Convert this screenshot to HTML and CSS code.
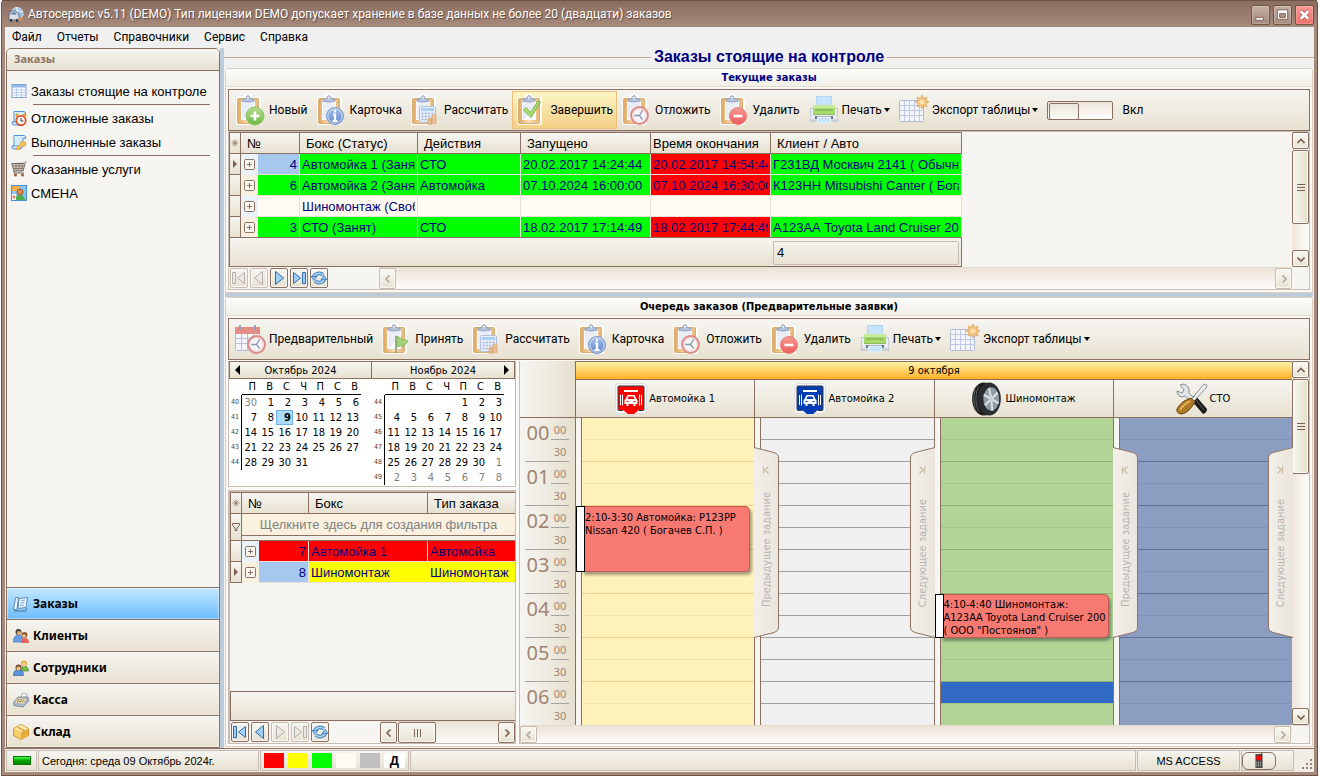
FILE: index.html
```html
<!DOCTYPE html>
<html lang="ru">
<head>
    <meta charset="UTF-8">
    <meta name="viewport" content="width=device-width, initial-scale=1.0">
    <title>Автосервис v5.11</title>
    <link rel="stylesheet" href="styles.css">
</head>
<body>
    <!-- Icon set -->
    <svg class="defs" aria-hidden="true">
        <defs>
            <linearGradient id="gGreen" x1="0" y1="0" x2="0" y2="1"><stop offset="0" stop-color="#b4dc8c"/><stop offset="1" stop-color="#6cb840"/></linearGradient>
            <linearGradient id="gRed" x1="0" y1="0" x2="0" y2="1"><stop offset="0" stop-color="#f79a94"/><stop offset="1" stop-color="#ee5a58"/></linearGradient>
            <linearGradient id="gInfo" x1="0" y1="0" x2="0" y2="1"><stop offset="0" stop-color="#a9c3ea"/><stop offset="1" stop-color="#5c86cc"/></linearGradient>
            <linearGradient id="gWood" x1="0" y1="0" x2="1" y2="0"><stop offset="0" stop-color="#e0a862"/><stop offset="0.5" stop-color="#f8ddb0"/><stop offset="1" stop-color="#e6b878"/></linearGradient>
            <linearGradient id="gTab" x1="0" y1="0" x2="1" y2="0"><stop offset="0" stop-color="#f3efe8"/><stop offset="1" stop-color="#eae5dd"/></linearGradient>
            <symbol id="clip" viewBox="0 0 32 32">
                <path d="M3 3h5q1-3 5-3t5 3h6q2 0 2 2v24q0 2-2 2H3q-2 0-2-2V5q0-2 2-2z" fill="#fff" opacity="0.9"/>
                <rect x="2.500" y="4.500" width="21" height="25" rx="1" fill="url(#gWood)" stroke="#dcae74"/>
                <path d="M6 6h14v20H6z" fill="#fdfdff"/>
                <path d="M7 7h12v4L9 25H7z" fill="#eaecf6"/>
                <path d="M6.500 7q6.500 2 13 0l-1-2h-3q-1-3.500-2.500-3.500T10.500 5h-3z" fill="#b9c5dc" stroke="#8d9dbd" stroke-width="0.900"/>
                <circle cx="13" cy="3.600" r="0.900" fill="#fff"/>
            </symbol>
            <symbol id="clock" viewBox="0 0 18 18">
                <circle cx="9" cy="9" r="8" fill="#f4f6fa" stroke="#dc8a85" stroke-width="1.800"/>
                <circle cx="9" cy="9" r="6.400" fill="none" stroke="#eec4c1" stroke-width="0.800"/>
                <path d="M9 9L12 4M9 9H4M9 9l3 4" stroke="#8b96ae" stroke-width="1.200" fill="none"/>
            </symbol>
            <symbol id="i-new" viewBox="0 0 32 32"><use href="#clip"/><circle cx="20" cy="22" r="9" fill="url(#gGreen)" stroke="#8fc36c"/><path d="M20 17.500v9M15.500 22h9" stroke="#fff" stroke-width="2.600"/></symbol>
            <symbol id="i-card" viewBox="0 0 32 32"><use href="#clip"/><circle cx="19" cy="22" r="8.500" fill="url(#gInfo)" stroke="#7d9acc"/><circle cx="19" cy="22" r="7.200" fill="none" stroke="#d3e0f5"/><path d="M19 16v2.400M17 20.500h2V27M16.500 27h5" stroke="#fff" stroke-width="2.200" fill="none"/></symbol>
            <symbol id="i-calc" viewBox="0 0 32 32"><use href="#clip"/><rect x="9.500" y="12.500" width="16" height="16" rx="1" fill="#e6edf8" stroke="#b2c1de"/><path d="M11 14h13v3H11z" fill="#a8d0f2"/><path d="M11.500 19.500h12M11.500 22.500h12M11.500 25.500h12" stroke="#a3b4d4" stroke-width="1.500" stroke-dasharray="2 1.300"/><rect x="18" y="24.500" width="4" height="6" rx="1" fill="#e9bb8a" stroke="#cf9860" stroke-width="0.600"/><rect x="22" y="21" width="4" height="9" rx="1" fill="#edc297" stroke="#cf9860" stroke-width="0.600"/></symbol>
            <symbol id="i-done" viewBox="0 0 32 32"><use href="#clip"/><path d="M7.500 16l2.500-2.500 4.500 5L22 7l2.500 1L15 23.500z" fill="#a9dc70" stroke="#7bb548"/></symbol>
            <symbol id="i-defer" viewBox="0 0 32 32"><use href="#clip"/><use href="#clock" x="9" y="12" width="19" height="19"/></symbol>
            <symbol id="i-del" viewBox="0 0 32 32"><use href="#clip"/><circle cx="19" cy="22" r="8.500" fill="url(#gRed)" stroke="#ea7d79"/><path d="M14.500 22h9" stroke="#fff" stroke-width="2.600"/></symbol>
            <symbol id="i-accept" viewBox="0 0 32 32"><use href="#clip"/><path d="M15 13v17" stroke="#99a585" stroke-width="1.800"/><path d="M16 13q4 2 6 4 2-1 5 1-2 3-4 5-3-1-7 1z" fill="#a3d37a" stroke="#7fb357" stroke-width="0.800"/></symbol>
            <symbol id="i-sched" viewBox="0 0 32 32"><rect x="0.500" y="4.500" width="24" height="23" rx="1" fill="#f3f5fb" stroke="#b4bed6"/><path d="M0 4h25v7H0z" fill="#e48e88"/><path d="M1 15.500h23M1 20.500h23M6.500 11v16M12.500 11v16M18.500 11v16" stroke="#b6c1d8"/><path d="M5 2v5M20 2v5" stroke="#979eb0" stroke-width="1.800"/><use href="#clock" x="12" y="12" width="19" height="19"/></symbol>
            <symbol id="i-print" viewBox="0 0 32 32"><path d="M8.500 2.500h15V13h-15z" fill="#c6e3fc" stroke="#b1d4f5"/><path d="M2.500 14.500h27V26h-27z" fill="#e8ebf1" stroke="#c3c9d5"/><path d="M5 11h22v9H5z" fill="#a9da70"/><path d="M5 11h22v3H5z" fill="#c6eb9a"/><path d="M7 16h18" stroke="#86bb50" stroke-width="1.500"/><path d="M5 20.500h22" stroke="#8cbd58"/><path d="M7 22h18v3H7z" fill="#6f7885"/><path d="M9.500 23h13v6h-13z" fill="#c6e3fc" stroke="#eef6ff"/><path d="M1 27h8M23 27h8" stroke="#c3c8d2" stroke-width="1.500"/></symbol>
            <symbol id="i-export" viewBox="0 0 32 32"><rect x="1.500" y="6.500" width="24" height="21" rx="1" fill="#f3f5fc" stroke="#b0bbd8"/><path d="M2 11.500h23M2 16.500h23M2 21.500h23M6.500 7v20M11.500 7v20M16.500 7v20M21.500 7v20" stroke="#bec8e0"/><path d="M24 1l1.600 3.500L29 3l-1 3.500 3 1.500-3 1.500 1 3.500-3.400-1.500L24 15l-1.600-3.500L19 13l1-3.500L17 8l3-1.500L19 3l3.400 1.500z" fill="#f3c27c" stroke="#dba75e" stroke-width="0.800"/><circle cx="24" cy="8" r="2.500" fill="#fbdfab"/></symbol>

            <symbol id="n-first" viewBox="0 0 16 16"><path d="M1.500 2.500h3v11h-3zM13.500 2.500v11l-7-5.500z" fill="currentColor" stroke="var(--edge)"/></symbol>
            <symbol id="n-prev" viewBox="0 0 16 16"><path d="M11.500 1.500v13L3.500 8z" fill="currentColor" stroke="var(--edge)"/></symbol>
            <symbol id="n-next" viewBox="0 0 16 16"><path d="M4.500 1.500v13L12.500 8z" fill="currentColor" stroke="var(--edge)"/></symbol>
            <symbol id="n-last" viewBox="0 0 16 16"><path d="M11.500 2.500h3v11h-3zM2.500 2.500v11l7-5.500z" fill="currentColor" stroke="var(--edge)"/></symbol>
            <symbol id="n-sync" viewBox="0 0 16 16"><path d="M2.500 7.500A5.500 4.800 0 0 1 12 5M13.500 8.500A5.500 4.800 0 0 1 4 11" fill="none" stroke="#3f7fbd" stroke-width="3.600"/><path d="M2.500 7.500A5.500 4.800 0 0 1 12 5M13.500 8.500A5.500 4.800 0 0 1 4 11" fill="none" stroke="#a5d2f7" stroke-width="1.600"/><path d="M0 6.500h6L3 10.500zM10 9.500h6L13 5.500z" fill="#8cc2f0" stroke="#3f7fbd" stroke-width="0.800"/></symbol>
            <symbol id="a-left" viewBox="0 0 8 8"><path d="M5.500 0.500L2 4l3.500 3.500" fill="none" stroke="currentColor" stroke-width="1.600"/></symbol>
            <symbol id="a-right" viewBox="0 0 8 8"><path d="M2.500 0.500L6 4 2.500 7.500" fill="none" stroke="currentColor" stroke-width="1.600"/></symbol>
            <symbol id="a-up" viewBox="0 0 8 8"><path d="M0.500 6L4 2.500 7.500 6" fill="none" stroke="currentColor" stroke-width="1.600"/></symbol>
            <symbol id="a-down" viewBox="0 0 8 8"><path d="M0.500 2.500L4 6l3.500-3.500" fill="none" stroke="currentColor" stroke-width="1.600"/></symbol>
            <symbol id="j-prev" viewBox="0 0 8 8"><path d="M6.500 0.500L3 4l3.500 3.500M1.500 0.500v7" fill="none" stroke="currentColor" stroke-width="1.300"/></symbol>
            <symbol id="j-next" viewBox="0 0 8 8"><path d="M1.500 0.500L5 4 1.500 7.500M6.500 0.500v7" fill="none" stroke="currentColor" stroke-width="1.300"/></symbol>
            <symbol id="star" viewBox="0 0 8 8"><path d="M4 0.500v7M0.500 4h7M1.500 1.500l5 5M6.500 1.500l-5 5" stroke="#8f7465" stroke-width="0.800"/></symbol>
            <symbol id="wash" viewBox="0 0 32 34"><rect x="0.500" y="1.500" width="31" height="30" rx="3" fill="#f8f8fa" stroke="#dedee2"/><path d="M4 4h24q1 0 1 1v22q0 1-1 1h-4l-5 4h-6l-5-4H4q-1 0-1-1V5q0-1 1-1z" fill="currentColor"/><path d="M8 28.500H4q-1 0-1-1V5q0-1 1-1h24q1 0 1 1v22.500q0 1-1 1h-4" fill="none" stroke="#3a3a3e"/><path d="M9 9h14" stroke="#fff" stroke-width="2"/><path d="M5.500 13v10M26.500 13v10M7.500 12.500v11M24.500 12.500v11" stroke="#fff"/><path d="M10.500 17l2-4h7l2 4 1 1v4h-2v2h-2v-2h-5v2h-2v-2h-2v-4z" fill="#fff"/><path d="M12.500 17l1-2.500h5l1 2.500zM11.500 19h2v1h-2zM18.500 19h2v1h-2z" fill="currentColor"/></symbol>
            <symbol id="tire" viewBox="0 0 30 32"><ellipse cx="12" cy="16" rx="11" ry="15.500" fill="#1c1c1e"/><path d="M4 7Q1 16 4 25M7 4Q2 16 7 28" stroke="#5a5c60" fill="none"/><ellipse cx="17" cy="16" rx="11" ry="15.500" fill="#2b2c2f"/><ellipse cx="19" cy="16" rx="7.500" ry="11" fill="#8f9aa4"/><path d="M19 16L17 5.500M19 16l6-6M19 16l7 4M19 16l1 11M19 16l-6 6M19 16l-7-4" stroke="#d8dfe5" stroke-width="2"/><circle cx="19" cy="16" r="2.400" fill="#c9d0d6"/></symbol>
            <symbol id="tools" viewBox="0 0 32 32"><path d="M14 16l5-4 12 14q0 4-4 5z" fill="#1e1e1e"/><path d="M20 17l8 10" stroke="#606060"/><path d="M8 1L4 2l4 5-2 3-5-2Q1 13 6 14l3-1 6 5 3-3-5-5q1-7-5-9z" fill="#e2e5e7" stroke="#7e8488" stroke-width="0.900"/><path d="M29 1l-2 1-11 14 2 2L30 5l1-3z" fill="#eceef0" stroke="#83888c" stroke-width="0.900"/><path d="M15 15l4 4Q12 31 5 31q-5-1-4-5Q5 18 15 15z" fill="#b07a24" stroke="#6c4610"/><path d="M14 18Q8 21 4 27" stroke="#e9b862" stroke-width="1.500" fill="none"/></symbol>
            <symbol id="plus" viewBox="0 0 11 11"><rect x="0.500" y="0.500" width="10" height="10" rx="1" fill="#f8f4ee" stroke="#8f7465"/><path d="M5.500 3v5M3 5.500h5" stroke="#8f7465"/></symbol>
            <symbol id="s-list" viewBox="0 0 16 16"><rect x="1" y="1.500" width="14" height="13" fill="#fff" stroke="#7fa3d4"/><path d="M1 2h14v2.500H1z" fill="#93b9e8"/><path d="M2 7h12M2 9.500h12M2 12h12M5.500 5v9M10.500 5v9" stroke="#b3cbea"/></symbol>
            <symbol id="s-scroll" viewBox="0 0 16 16"><path d="M3 1.500h10q2 0 1.500 3H12l-1 9q-1 2-3 1.500H2Q0 14 1.500 12H3l0-8q-1-2 0-2.500z" fill="#d8ecfd" stroke="#4f93d2"/><path d="M1.500 12h7l1 2.500" fill="#fff" stroke="#4f93d2"/></symbol>
            <symbol id="s-defer" viewBox="0 0 16 16"><use href="#s-scroll"/><path d="M5 6l2-2M15 6l-2-2" stroke="#e8a125" stroke-width="2.500"/><circle cx="10" cy="10.500" r="4.700" fill="#fff" stroke="#e2552a" stroke-width="1.800"/><path d="M10 8v3h2.500" stroke="#333" fill="none"/></symbol>
            <symbol id="s-done" viewBox="0 0 16 16"><use href="#s-scroll"/><path d="M10 8q3-2 5 1l-1 3-3 0-4 4H5.500v-2l4-4z" fill="#f6c65b" stroke="#d99a2a" stroke-width="0.800"/></symbol>
            <symbol id="s-cart" viewBox="0 0 16 16"><path d="M0.500 2.500h13l2-2M1 3l2 7h9l2-7" fill="#d9cfc6" stroke="#6f625a"/><path d="M2 5h11M2.500 7.500h10M5 3v7M8 3v7M11 3v7" stroke="#8a7c72"/><path d="M3 10v2h10" fill="none" stroke="#6f625a"/><circle cx="4.500" cy="14" r="1.500" fill="#9a5d38"/><circle cx="11.500" cy="14" r="1.500" fill="#9a5d38"/></symbol>
            <symbol id="s-shift" viewBox="0 0 16 16"><rect x="0.500" y="0.500" width="15" height="15" fill="#8cc4f2" stroke="#4c8fd0"/><path d="M1 1h8v5H1z" fill="#f5b04c"/><circle cx="9" cy="7" r="3" fill="#e08a4c" stroke="#9a5a2c"/><path d="M4 15q1-5 5-5t5 5z" fill="#4fae4a"/><path d="M1 9h4v6H1z" fill="#fff"/><path d="M3 10v4M1.500 12h3" stroke="#e15c3c"/></symbol>
            <symbol id="b-orders" viewBox="0 0 16 16"><path d="M2.500 1.500h3l-1.500 12H0.500zM6 2.500l8.500-1-1.500 10-8 1z" fill="#e8f5ff" stroke="#6089b4"/><path d="M8 4.500l4-.5M7.500 7l4-.5M7 9.500l4-.5" stroke="#7aa5cf"/><path d="M1 15h11.500l1.500-3" fill="none" stroke="#5f8cba" stroke-width="1.500"/></symbol>
            <symbol id="b-clients" viewBox="0 0 16 16"><path d="M0.500 14q0-7 5-7t4.500 7z" fill="#6b9ee4" stroke="#3f6fb8" stroke-width="0.700"/><circle cx="5.500" cy="4" r="3" fill="#4c4038"/><circle cx="6" cy="5" r="2" fill="#e2b186"/><path d="M8 15q0-5 4-5t4 5z" fill="#e6635a"/><circle cx="11.500" cy="7" r="2.900" fill="#8a5932"/><circle cx="11" cy="8" r="1.800" fill="#efc59b"/></symbol>
            <symbol id="b-staff" viewBox="0 0 16 16"><path d="M8 11q0-5 3.500-5t4 5z" fill="#77b94c" stroke="#4d8b2c" stroke-width="0.700"/><circle cx="11" cy="3.500" r="3" fill="#e9ab3c"/><circle cx="11" cy="4.500" r="2" fill="#f4cea4"/><path d="M0.500 15.500q0-6 5-6t5 6z" fill="#5b93dd" stroke="#33639f" stroke-width="0.700"/><circle cx="5.500" cy="7.500" r="3" fill="#7a4c2c"/><circle cx="5.500" cy="8.500" r="2" fill="#efc298"/></symbol>
            <symbol id="b-cash" viewBox="0 0 16 16"><path d="M8 6l1-5 5 1-1 4z" fill="#fff" stroke="#8ea5bf" stroke-width="0.800"/><path d="M0.500 10.500L5 5l10 0 .5 4L10 15 1 13.500z" fill="#aeb9c6" stroke="#6d7a8a" stroke-width="0.800"/><path d="M2 10l3-4 8 1-3 5z" fill="#ecd998"/><path d="M4 9l6 1M5 7.500l6 .8" stroke="#6d6a55" stroke-dasharray="1.500 1"/></symbol>
            <symbol id="b-store" viewBox="0 0 16 16"><path d="M8 0.500l7.500 4v7L8 15.500l-7.500-4v-7z" fill="#f7cf6b" stroke="#d29a2c"/><path d="M8 8l7-3.500v7L8 15z" fill="#e8ae3c"/><path d="M1 4.500L8 1l7 3.500L8 8z" fill="#fde9ae"/><path d="M4 3l7 3.500v3" stroke="#e1aa45" fill="none" stroke-width="1.500"/></symbol>
        </defs>
    </svg>

    <div class="window">
        <header class="titlebar">
            <svg class="app-icon" viewBox="0 0 16 16"><circle cx="9" cy="6.500" r="6" fill="#8fbce2" stroke="#e4eef7"/><path d="M4 5q5-3 10 0M9 1v11" stroke="#fff" fill="none"/><path d="M1 8l2-4h5l3 4v5H1z" fill="#d9dfe6" stroke="#66727f"/><path d="M3 7.500l1-2h3.500l1 2z" fill="#4f7faa"/><path d="M2 12h2v3H2zM8 12h2v3H8z" fill="#39424c"/><circle cx="12.500" cy="12" r="2" fill="#e08b5a"/></svg>
            <h1 class="app-title">Автосервис v5.11 (DEMO) Тип лицензии DEMO допускает хранение в базе данных не более 20 (двадцати) заказов</h1>
            <button class="win-btn" aria-label="Свернуть"><svg viewBox="0 0 18 18"><path d="M4 11.500h8v3H4z" fill="#fff" stroke="#7d6154"/></svg></button>
            <button class="win-btn" aria-label="Развернуть"><svg viewBox="0 0 18 18"><path d="M3.500 3.500h11v10h-11z" fill="#fff" stroke="#7d6154"/><path d="M6 7.500h6v4H6z" fill="#b09588" stroke="#7d6154"/></svg></button>
            <button class="win-btn close" aria-label="Закрыть"><svg viewBox="0 0 18 18"><path d="M5 5l8 8M13 5l-8 8" stroke="#b3564f" stroke-width="4.500"/><path d="M5 5l8 8M13 5l-8 8" stroke="#fff" stroke-width="3"/></svg></button>
        </header>

        <nav class="menu">
            <a href="#">Файл</a>
            <a href="#">Отчеты</a>
            <a href="#">Справочники</a>
            <a href="#">Сервис</a>
            <a href="#">Справка</a>
        </nav>

        <div class="workspace">
            <aside class="sidebar">
                <h2 class="side-title">Заказы</h2>
                <div class="side-links">
                    <a href="#"><svg><use href="#s-list"/></svg>Заказы стоящие на контроле</a>
                    <hr>
                    <a href="#"><svg><use href="#s-defer"/></svg>Отложенные заказы</a>
                    <a href="#"><svg><use href="#s-done"/></svg>Выполненные заказы</a>
                    <hr>
                    <a href="#"><svg><use href="#s-cart"/></svg>Оказанные услуги</a>
                    <a href="#"><svg><use href="#s-shift"/></svg>СМЕНА</a>
                </div>
                <div class="side-groups">
                    <button class="active"><svg><use href="#b-orders"/></svg>Заказы</button>
                    <button><svg><use href="#b-clients"/></svg>Клиенты</button>
                    <button><svg><use href="#b-staff"/></svg>Сотрудники</button>
                    <button><svg><use href="#b-cash"/></svg>Касса</button>
                    <button><svg><use href="#b-store"/></svg>Склад</button>
                </div>
            </aside>

            <main class="main">
                <div class="page-title"><h2>Заказы стоящие на контроле</h2></div>

                <section class="panel">
                    <h3 class="panel-title navy">Текущие заказы</h3>
                    <div class="toolbar">
                        <button><svg><use href="#i-new"/></svg>Новый</button>
                        <button><svg><use href="#i-card"/></svg>Карточка</button>
                        <button><svg><use href="#i-calc"/></svg>Рассчитать</button>
                        <button class="hot"><svg><use href="#i-done"/></svg>Завершить</button>
                        <button><svg><use href="#i-defer"/></svg>Отложить</button>
                        <button><svg><use href="#i-del"/></svg>Удалить</button>
                        <button><svg><use href="#i-print"/></svg>Печать<i class="caret"></i></button>
                        <button><svg><use href="#i-export"/></svg>Экспорт таблицы<i class="caret"></i></button>
                        <label class="switch"><input type="checkbox">Вкл</label>
                    </div>
                    <div class="grid">
                        <div class="grid-view">
                            <div class="grid-rows">
                                <table class="data orders">
                                    <colgroup><col class="c-mark"><col class="c-exp"><col class="c-num"><col class="c-box"><col class="c-act"><col class="c-start"><col class="c-end"><col class="c-client"></colgroup>
                                    <thead>
                                        <tr><th class="mark"><svg><use href="#star"/></svg></th><th colspan="2">№</th><th>Бокс (Статус)</th><th>Действия</th><th>Запущено</th><th class="tight">Время окончания</th><th>Клиент / Авто</th></tr>
                                    </thead>
                                    <tbody>
                                        <tr class="busy"><td class="mark"><i class="cursor"></i></td><td class="exp blue"><svg><use href="#plus"/></svg></td><td class="num focus">4</td><td><div>Автомойка 1 (Занят)</div></td><td>СТО</td><td>20.02.2017 14:24:44</td><td class="late"><div>20.02.2017 14:54:44</div></td><td><div>Г231ВД Москвич 2141 ( Обычный )</div></td></tr>
                                        <tr class="busy"><td class="mark"></td><td class="exp"><svg><use href="#plus"/></svg></td><td class="num">6</td><td><div>Автомойка 2 (Занят)</div></td><td>Автомойка</td><td>07.10.2024 16:00:00</td><td class="late"><div>07.10.2024 16:30:00</div></td><td><div>К123НН Mitsubishi Canter ( Богачев )</div></td></tr>
                                        <tr><td class="mark"></td><td class="exp blue"><svg><use href="#plus"/></svg></td><td class="num"></td><td><div>Шиномонтаж (Свободен)</div></td><td></td><td></td><td></td><td></td></tr>
                                        <tr class="busy"><td class="mark"></td><td class="exp"><svg><use href="#plus"/></svg></td><td class="num">3</td><td>СТО (Занят)</td><td>СТО</td><td>18.02.2017 17:14:49</td><td class="late"><div>18.02.2017 17:44:49</div></td><td><div>А123АА Toyota Land Cruiser 200</div></td></tr>
                                    </tbody>
                                    <tfoot>
                                        <tr><td colspan="7"></td><td><div class="total">4</div></td></tr>
                                    </tfoot>
                                </table>
                            </div>
                            <div class="vscroll">
                                <button aria-label="Вверх"><svg><use href="#a-up"/></svg></button>
                                <div class="thumb orders-thumb"></div>
                                <button class="end" aria-label="Вниз"><svg><use href="#a-down"/></svg></button>
                            </div>
                        </div>
                        <div class="grid-nav">
                            <div class="navigator">
                                <button disabled aria-label="Первая"><svg><use href="#n-first"/></svg></button>
                                <button disabled aria-label="Назад"><svg><use href="#n-prev"/></svg></button>
                                <button aria-label="Вперед"><svg><use href="#n-next"/></svg></button>
                                <button aria-label="Последняя"><svg><use href="#n-last"/></svg></button>
                                <button aria-label="Обновить"><svg><use href="#n-sync"/></svg></button>
                            </div>
                            <div class="hscroll">
                                <button disabled aria-label="Влево"><svg><use href="#a-left"/></svg></button>
                                <button disabled class="end" aria-label="Вправо"><svg><use href="#a-right"/></svg></button>
                            </div>
                            <div class="corner"></div>
                        </div>
                    </div>
                </section>

                <section class="panel queue">
                    <h3 class="panel-title">Очередь заказов (Предварительные заявки)</h3>
                    <div class="toolbar">
                        <button><svg><use href="#i-sched"/></svg>Предварительный</button>
                        <button><svg><use href="#i-accept"/></svg>Принять</button>
                        <button><svg><use href="#i-calc"/></svg>Рассчитать</button>
                        <button><svg><use href="#i-card"/></svg>Карточка</button>
                        <button><svg><use href="#i-defer"/></svg>Отложить</button>
                        <button><svg><use href="#i-del"/></svg>Удалить</button>
                        <button><svg><use href="#i-print"/></svg>Печать<i class="caret"></i></button>
                        <button><svg><use href="#i-export"/></svg>Экспорт таблицы<i class="caret"></i></button>
                    </div>
                    <div class="queue-body">
                        <div class="queue-left">
                            <div class="calendars">
                                <div class="month">
                                    <div class="month-head"><button class="arrow prev" aria-label="Предыдущий месяц"></button>Октябрь 2024</div>
                                    <table>
                                        <thead><tr><td></td><th>П</th><th>В</th><th>С</th><th>Ч</th><th>П</th><th>С</th><th>В</th></tr></thead>
                                        <tbody>
                                            <tr><th>40</th><td class="other">30</td><td>1</td><td>2</td><td>3</td><td>4</td><td>5</td><td>6</td></tr>
                                            <tr><th>41</th><td>7</td><td>8</td><td class="today">9</td><td>10</td><td>11</td><td>12</td><td>13</td></tr>
                                            <tr><th>42</th><td>14</td><td>15</td><td>16</td><td>17</td><td>18</td><td>19</td><td>20</td></tr>
                                            <tr><th>43</th><td>21</td><td>22</td><td>23</td><td>24</td><td>25</td><td>26</td><td>27</td></tr>
                                            <tr><th>44</th><td>28</td><td>29</td><td>30</td><td>31</td><td></td><td></td><td></td></tr>
                                        </tbody>
                                    </table>
                                </div>
                                <div class="month">
                                    <div class="month-head">Ноябрь 2024<button class="arrow next" aria-label="Следующий месяц"></button></div>
                                    <table>
                                        <thead><tr><td></td><th>П</th><th>В</th><th>С</th><th>Ч</th><th>П</th><th>С</th><th>В</th></tr></thead>
                                        <tbody>
                                            <tr><th>44</th><td></td><td></td><td></td><td></td><td>1</td><td>2</td><td>3</td></tr>
                                            <tr><th>45</th><td>4</td><td>5</td><td>6</td><td>7</td><td>8</td><td>9</td><td>10</td></tr>
                                            <tr><th>46</th><td>11</td><td>12</td><td>13</td><td>14</td><td>15</td><td>16</td><td>17</td></tr>
                                            <tr><th>47</th><td>18</td><td>19</td><td>20</td><td>21</td><td>22</td><td>23</td><td>24</td></tr>
                                            <tr><th>48</th><td>25</td><td>26</td><td>27</td><td>28</td><td>29</td><td>30</td><td class="other">1</td></tr>
                                            <tr><th>49</th><td class="other">2</td><td class="other">3</td><td class="other">4</td><td class="other">5</td><td class="other">6</td><td class="other">7</td><td class="other">8</td></tr>
                                        </tbody>
                                    </table>
                                </div>
                            </div>

                            <div class="requests">
                                <table class="data">
                                    <colgroup><col class="c-mark"><col class="c-exp"><col class="c-id"><col class="c-place"><col></colgroup>
                                    <thead>
                                        <tr><th class="mark"><svg><use href="#star"/></svg></th><th colspan="2">№</th><th>Бокс</th><th>Тип заказа</th></tr>
                                        <tr class="filter"><th class="mark"><svg viewBox="0 0 8 8"><path d="M0.500 0.500h7v2L5 5v2.500H3V5L0.500 2.500z" fill="none" stroke="#7d6154"/></svg></th><td colspan="4"><input type="text" aria-label="Фильтр" placeholder="Щелкните здесь для создания фильтра"></td></tr>
                                    </thead>
                                    <tbody>
                                        <tr class="new"><td class="mark"></td><td class="exp blue"><svg><use href="#plus"/></svg></td><td class="num">7</td><td>Автомойка 1</td><td>Автомойка</td></tr>
                                        <tr class="wait"><td class="mark"><i class="cursor"></i></td><td class="exp"><svg><use href="#plus"/></svg></td><td class="num focus">8</td><td>Шиномонтаж</td><td>Шиномонтаж</td></tr>
                                    </tbody>
                                </table>
                                <div class="requests-foot"></div>
                                <div class="grid-nav">
                                    <div class="navigator">
                                        <button aria-label="Первая"><svg><use href="#n-first"/></svg></button>
                                        <button aria-label="Назад"><svg><use href="#n-prev"/></svg></button>
                                        <button disabled aria-label="Вперед"><svg><use href="#n-next"/></svg></button>
                                        <button disabled aria-label="Последняя"><svg><use href="#n-last"/></svg></button>
                                        <button aria-label="Обновить"><svg><use href="#n-sync"/></svg></button>
                                    </div>
                                    <div class="hscroll">
                                        <button aria-label="Влево"><svg><use href="#a-left"/></svg></button>
                                        <div class="thumb"></div>
                                        <button class="end" aria-label="Вправо"><svg><use href="#a-right"/></svg></button>
                                    </div>
                                </div>
                            </div>
                        </div>

                        <div class="scheduler">
                            <div class="sched-main">
                                <div class="ruler">
                                    <div class="ruler-head"></div>
                                    <div class="hour"><b>00</b><span>00</span><span>30</span></div>
                                    <div class="hour"><b>01</b><span>00</span><span>30</span></div>
                                    <div class="hour"><b>02</b><span>00</span><span>30</span></div>
                                    <div class="hour"><b>03</b><span>00</span><span>30</span></div>
                                    <div class="hour"><b>04</b><span>00</span><span>30</span></div>
                                    <div class="hour"><b>05</b><span>00</span><span>30</span></div>
                                    <div class="hour"><b>06</b><span>00</span><span>30</span></div>
                                </div>
                                <div class="day">
                                    <div class="day-title">9 октября</div>
                                    <div class="resources">
                                        <div class="resource">
                                            <div class="resource-head red"><svg><use href="#wash"/></svg>Автомойка 1</div>
                                            <div class="slots yellow">
                                                <div class="event nissan">2:10-3:30 Автомойка: Р123РР Nissan 420 ( Богачев С.П. )</div>
                                            </div>
                                        </div>
                                        <div class="resource">
                                            <div class="resource-head navy-icon"><svg><use href="#wash"/></svg>Автомойка 2</div>
                                            <div class="slots gray">
                                                <button class="jump prev" disabled><svg viewBox="0 0 25 191"><path d="M0 0.500L20 5.500Q24.500 7 24.500 11V181Q24.500 184 20 185.500L0 190.500" fill="url(#gTab)" stroke="#8f7465"/></svg><svg class="tip"><use href="#j-prev"/></svg><span>Предыдущее задание</span></button>
                                                <button class="jump next" disabled><svg viewBox="0 0 25 191"><path d="M25 0.500L5 5.500Q0.500 7 0.500 11V181Q0.500 184 5 185.500L25 190.500" fill="url(#gTab)" stroke="#8f7465"/></svg><svg class="tip"><use href="#j-next"/></svg><span>Следующее задание</span></button>
                                            </div>
                                        </div>
                                        <div class="resource">
                                            <div class="resource-head"><svg><use href="#tire"/></svg>Шиномонтаж</div>
                                            <div class="slots green">
                                                <div class="event toyota">4:10-4:40 Шиномонтаж: А123АА Toyota Land Cruiser 200 ( ООО "Постоянов" )</div>
                                                <div class="selected"></div>
                                            </div>
                                        </div>
                                        <div class="resource">
                                            <div class="resource-head"><svg><use href="#tools"/></svg>СТО</div>
                                            <div class="slots steel">
                                                <button class="jump prev" disabled><svg viewBox="0 0 25 191"><path d="M0 0.500L20 5.500Q24.500 7 24.500 11V181Q24.500 184 20 185.500L0 190.500" fill="url(#gTab)" stroke="#8f7465"/></svg><svg class="tip"><use href="#j-prev"/></svg><span>Предыдущее задание</span></button>
                                                <button class="jump next" disabled><svg viewBox="0 0 25 191"><path d="M25 0.500L5 5.500Q0.500 7 0.500 11V181Q0.500 184 5 185.500L25 190.500" fill="url(#gTab)" stroke="#8f7465"/></svg><svg class="tip"><use href="#j-next"/></svg><span>Следующее задание</span></button>
                                            </div>
                                        </div>
                                    </div>
                                </div>
                                <div class="vscroll">
                                    <button aria-label="Вверх"><svg><use href="#a-up"/></svg></button>
                                    <div class="thumb sched-thumb"></div>
                                    <button class="end" aria-label="Вниз"><svg><use href="#a-down"/></svg></button>
                                </div>
                            </div>
                            <div class="hscroll">
                                <button disabled aria-label="Влево"><svg><use href="#a-left"/></svg></button>
                                <button disabled class="end" aria-label="Вправо"><svg><use href="#a-right"/></svg></button>
                                <div class="corner"></div>
                            </div>
                        </div>
                    </div>
                </section>
            </main>
        </div>

        <footer class="status">
            <div class="cell led-cell"><i class="led"></i></div>
            <div class="cell date">Сегодня: среда 09 Октябрь 2024г.</div>
            <div class="cell legend"><i class="k-red"></i><i class="k-yellow"></i><i class="k-green"></i><i class="k-cream"></i><i class="k-silver"></i><b>Д</b></div>
            <div class="cell fill"></div>
            <div class="cell db">MS ACCESS</div>
            <div class="cell phone-cell"><button class="phone" aria-label="Телефон"><svg viewBox="0 0 12 18"><path d="M2 1h7q1 0 1 1v15H2z" fill="#4a4a4a"/><path d="M9 0v4" stroke="#222"/><path d="M3 3h6v5H3z" fill="#f00"/><path d="M3 10.500h6M3 12.500h6M3 14.500h6" stroke="#ddd" stroke-dasharray="1 1"/></svg></button></div>
            <svg class="grip" viewBox="0 0 12 12"><path d="M9 1h2v2H9zM5 5h2v2H5zM9 5h2v2H9zM1 9h2v2H1zM5 9h2v2H5zM9 9h2v2H9z" fill="#9c8478"/></svg>
        </footer>
    </div>
</body>
</html>
```

FILE: styles.css
```css
:root {
    --line: #8b7061;
    --soft: #c8bbb1;
    --pane: #f6f5f1;
    --bar: linear-gradient(#f6f5f1, #e7e1d0);
    --split: #bccbdb;
}

* {
    margin: 0;
    padding: 0;
    box-sizing: border-box;
}

body {
    height: 100vh;
    padding: 0 2px 1px 1px;
    background: #fff;
    font-family: Roboto, "Noto Sans", sans-serif;
    font-size: 12px;
    color: #000;
    overflow: hidden;
}

button,
input {
    font: inherit;
    color: inherit;
    border: none;
    background: none;
}

a {
    color: inherit;
    text-decoration: none;
}

table {
    border-spacing: 0;
}

.defs {
    position: absolute;
    width: 0;
    height: 0;
}

.window {
    height: 100%;
    display: flex;
    flex-direction: column;
    border: 1px solid #6e5347;
    border-top: none;
    border-radius: 4px 4px 0 0;
    background: #a5897b;
    padding: 0 3px 3px;
}

/* Title bar and menu */
.titlebar {
    flex: none;
    height: 27px;
    margin: 0 -3px;
    padding: 1px 3px 0;
    display: flex;
    align-items: center;
    gap: 3px;
    border-top: 1px solid #6e5347;
    background: linear-gradient(#8a6d5f, #a78b7c);
}

.app-icon {
    width: 16px;
    height: 16px;
    margin-left: 3px;
}

.app-title {
    flex: 1;
    padding: 0 0 2px 1px;
    font-size: 12px;
    font-weight: 400;
    color: #fff;
    text-shadow: 1px 1px 1px #5d463b;
    white-space: nowrap;
    overflow: hidden;
}

.win-btn {
    width: 19px;
    height: 20px;
    border: 1px solid #6e5347;
    border-radius: 2px;
    background: linear-gradient(#c6afa4, #a58b7d);
    box-shadow: inset 0 0 0 1px rgba(255, 255, 255, 0.2);
}

.win-btn svg {
    display: block;
    width: 17px;
    height: 18px;
}

.win-btn.close {
    background: linear-gradient(#f79994, #f0706c);
}

.menu {
    flex: none;
    height: 21px;
    padding: 0 7px 2px;
    display: flex;
    align-items: center;
    gap: 15px;
    background: #f0f0f0;
    line-height: 16px;
}

/* Layout */
.workspace {
    flex: 1;
    min-height: 0;
    display: flex;
    background: #f0f0f0;
}

.sidebar {
    flex: none;
    width: 214px;
    margin: 0 0 0 1px;
    display: flex;
    flex-direction: column;
    border: 1px solid var(--line);
    border-radius: 5px 5px 0 0;
    background: var(--pane);
    font-family: "Liberation Sans", sans-serif;
    overflow: hidden;
}

.side-title {
    height: 22px;
    padding-left: 7px;
    border-bottom: 1px solid var(--line);
    background: var(--bar);
    font-family: "Noto Sans", sans-serif;
    font-size: 11px;
    line-height: 20px;
    color: #8f7465;
}

.side-links {
    flex: 1;
    padding: 8px 9px 0 4px;
}

.side-links a {
    height: 24px;
    display: flex;
    align-items: center;
    gap: 4px;
    font-size: 13px;
    white-space: nowrap;
}

.side-links svg {
    flex: none;
    width: 16px;
    height: 16px;
}

.side-links hr {
    height: 1px;
    margin: 1px 0 1px 22px;
    border: none;
    background: var(--line);
}

.side-groups button {
    width: 100%;
    height: 32px;
    display: flex;
    align-items: center;
    gap: 4px;
    padding-left: 6px;
    border-top: 1px solid var(--line);
    background: var(--bar);
    box-shadow: inset 0 0 0 1px rgba(255, 255, 255, 0.4);
    font-family: "Noto Sans", sans-serif;
    font-size: 12px;
    font-weight: 700;
}

.side-groups .active {
    background: linear-gradient(#c3e9ff, #6cbcfd);
}

.side-groups svg {
    width: 16px;
    height: 16px;
}

.main {
    flex: 1;
    min-width: 0;
    display: flex;
    flex-direction: column;
    border-left: 4px solid var(--split);
    background: var(--pane);
}

.page-title {
    flex: none;
    height: 20px;
    padding-bottom: 2px;
    display: flex;
    align-items: center;
    gap: 3px;
    background: #f0f0f0;
}

.page-title::before,
.page-title::after {
    content: "";
    flex: 1;
    height: 1px;
    background: #bba99c;
}

.page-title h2 {
    font: 700 16px/18px "Liberation Sans", sans-serif;
    color: #000080;
}

.panel {
    flex: none;
    margin: 0 1px;
    padding: 0 2px 2px;
    border: 1px solid #d8cebb;
    border-radius: 3px 3px 0 0;
    background: #fbfaf7;
}

.panel.queue {
    flex: 1;
    min-height: 0;
    display: flex;
    flex-direction: column;
    margin-bottom: 1px;
}

.panel:not(.queue) {
    box-shadow: 0 4px 0 var(--split);
    margin-bottom: 4px;
}

.panel-title {
    flex: none;
    height: 18px;
    margin: 0 -2px 2px;
    border-bottom: 1px solid #e3dccb;
    background: linear-gradient(#fdfdfb, #f1efe8);
    font: 700 11px/17px "DejaVu Sans Condensed", "DejaVu Sans", sans-serif;
    text-align: center;
}

.navy {
    color: #000080;
}

/* Toolbars */
.toolbar {
    flex: none;
    height: 42px;
    padding: 1px 2px;
    display: flex;
    border: 1px solid var(--line);
    background: var(--bar);
    overflow: hidden;
}

.toolbar button {
    flex: none;
    height: 38px;
    display: flex;
    align-items: center;
    gap: 2px;
    padding: 0 3px;
    border: 1px solid transparent;
    white-space: nowrap;
}

.toolbar .hot {
    border-color: #f0bf7c;
    background: linear-gradient(#fbf5c4, #f3d086);
}

.toolbar svg {
    width: 32px;
    height: 32px;
}

.caret {
    border: 3px solid transparent;
    border-top: 4px solid #000;
    border-bottom: none;
}

.switch {
    display: flex;
    align-items: center;
    gap: 9px;
    margin-left: 5px;
}

.switch input {
    appearance: none;
    width: 66px;
    height: 19px;
    padding: 1px;
    border: 1px solid var(--line);
    border-radius: 2px;
    background: linear-gradient(#ece3d8, #fff);
}

.switch input::before {
    content: "";
    display: block;
    width: 28px;
    height: 15px;
    border: 1px solid var(--line);
    border-radius: 2px;
    background: linear-gradient(#ece6dc, #fbfaf6);
}

/* Data tables */
.data {
    table-layout: fixed;
    font: 13px/18px "Liberation Sans", sans-serif;
    color: #000080;
}

.orders {
    width: 733px;
}

.c-mark { width: 12px; }
.c-exp { width: 17px; }
.c-num { width: 42px; }
.c-box { width: 118px; }
.c-act { width: 103px; }
.c-start { width: 130px; }
.c-end { width: 120px; }
.c-client { width: 191px; }
.c-id { width: 50px; }
.c-place { width: 119px; }

.data th {
    height: 22px;
    padding: 1px 0 0 6px;
    border: 1px solid var(--line);
    border-left: none;
    background: var(--bar);
    color: #000;
    font-weight: 400;
    text-align: left;
    white-space: nowrap;
}

.data th.tight {
    padding-left: 2px;
}

.data td {
    height: 21px;
    padding: 1px 2px 0;
    border-right: 1px solid #e6e1d8;
    border-bottom: 1px solid #e6e1d8;
    background: #fffbf0;
    white-space: nowrap;
}

.data td > div {
    overflow: hidden;
}

.data .mark {
    padding: 0;
    border-left: 1px solid var(--line);
    border-right: 1px solid var(--line);
    border-bottom-color: var(--line);
    background: var(--bar);
    line-height: 0;
    text-align: center;
}

.data .mark svg {
    display: inline-block;
    width: 8px;
    height: 8px;
}

.cursor {
    display: inline-block;
    border: 4px solid transparent;
    border-left-color: #7d6154;
    border-right: none;
}

.data .exp {
    padding: 0;
    border-right: none;
    border-bottom: none;
    background: #faf0e0;
    text-align: center;
}

.data .exp.blue {
    background: #eaf3fb;
}

.exp svg {
    display: block;
    width: 11px;
    height: 11px;
    margin: 0 auto;
}

.data .num {
    text-align: right;
}

.busy td { background: #0f0; }
.new td { background: #f00; }
.wait td { background: #ff0; }
.data .late { background: #f00; }
.data .focus { background: #a6c8ef; }

.orders tfoot td {
    height: 30px;
    border-top: 1px solid var(--line);
    border-bottom: 1px solid var(--line);
    border-right: none;
    background: var(--bar);
    color: #000;
}

.orders tfoot td:first-child {
    border-left: 1px solid var(--line);
}

.orders tfoot td:last-child {
    border-right: 1px solid var(--line);
}

.orders tbody tr:last-child td {
    height: 20px;
    border-bottom: none;
}

.total {
    height: 24px;
    padding-left: 3px;
    border: 1px solid var(--soft);
    border-radius: 2px;
    line-height: 22px;
}

/* Grid frame, navigator, scroll bars */
.grid {
    border: 1px solid var(--soft);
    background: var(--pane);
}

.grid-view {
    display: flex;
}

.grid-rows {
    flex: 1;
    min-width: 0;
    overflow: hidden;
}

.grid-nav {
    height: 22px;
    display: flex;
}

.navigator {
    flex: none;
    width: 150px;
    padding: 1px;
    display: flex;
    gap: 2px;
}

.navigator button {
    width: 18px;
    height: 20px;
    color: #9fd0fb;
    --edge: #2f6cab;
    border: 1px solid var(--line);
    border-radius: 2px;
    background: var(--bar);
    box-shadow: inset 0 0 0 1px #fbf9f5;
}

.navigator button:disabled {
    color: #ebe9e6;
    --edge: #b5b0aa;
    border-color: var(--soft);
}

.navigator svg {
    display: block;
    width: 16px;
    height: 16px;
}

.hscroll {
    flex: 1;
    display: flex;
    gap: 1px;
    background: linear-gradient(#ece3d6, #fdfcfa);
    border-top: 1px solid #e3dccb;
}

.vscroll {
    flex: none;
    width: 17px;
    display: flex;
    flex-direction: column;
    gap: 1px;
    background: linear-gradient(90deg, #efe6da, #fdfcfa);
}

.hscroll button,
.vscroll button,
.thumb {
    flex: none;
    width: 17px;
    height: 17px;
    display: flex;
    align-items: center;
    justify-content: center;
    border: 1px solid var(--line);
    border-radius: 2px;
    background: linear-gradient(#f8f7f3, #e8e3d3);
    box-shadow: inset 0 0 0 1px #fbf9f4;
    color: #7d6154;
}

.hscroll button {
    height: auto;
}

.hscroll button:disabled {
    border-color: var(--soft);
    color: #b3a79f;
}

.hscroll svg,
.vscroll svg {
    width: 8px;
    height: 8px;
}

.hscroll .end {
    margin-left: auto;
}

.vscroll .end {
    margin-top: auto;
}

.thumb::after {
    content: "";
    width: 8px;
    height: 7px;
    background: repeating-linear-gradient(#7d6154 0 1px, transparent 1px 3px);
}

.vscroll .thumb {
    background: linear-gradient(90deg, #f8f7f3, #e4dfca);
}

.hscroll .thumb {
    width: 38px;
    height: auto;
}

.hscroll .thumb::after {
    width: 7px;
    height: 8px;
    background: repeating-linear-gradient(90deg, #7d6154 0 1px, transparent 1px 3px);
}

.vscroll .orders-thumb {
    height: 74px;
}

.vscroll .sched-thumb {
    height: 95px;
}

.corner {
    flex: none;
    width: 17px;
    background: var(--pane);
}

/* Queue */
.queue-body {
    flex: 1;
    min-height: 0;
    display: flex;
    gap: 3px;
    padding-top: 1px;
}

.queue-left {
    flex: none;
    width: 288px;
    display: flex;
    flex-direction: column;
    gap: 3px;
}

.calendars {
    flex: none;
    height: 126px;
    display: flex;
    border: 1px solid var(--soft);
    border-top: none;
    background: #fff;
    font: 11px/15px "DejaVu Sans Condensed", "DejaVu Sans", sans-serif;
}

.month {
    flex: 1;
}

.month-head {
    position: relative;
    height: 18px;
    border: 1px solid var(--line);
    background: var(--bar);
    line-height: 17px;
    text-align: center;
}

.month + .month .month-head {
    border-left: none;
}

.arrow {
    position: absolute;
    top: 3px;
    border: 5px solid transparent;
}

.arrow.prev {
    left: 5px;
    border-left: none;
    border-right-color: #000;
}

.arrow.next {
    right: 5px;
    border-right: none;
    border-left-color: #000;
}

.month table {
    table-layout: fixed;
    width: 132px;
    text-align: right;
}

.month td,
.month th {
    height: 15px;
    padding-right: 2px;
    font-weight: 400;
}

.month thead td {
    width: 13px;
}

.month thead th {
    height: 16px;
    padding-right: 3px;
    border-bottom: 1px solid #000;
}

.month tbody th {
    padding: 0;
    border-right: 1px solid #000;
    font-size: 7px;
    color: #444;
    text-align: center;
}

.month .other {
    color: #808080;
}

.month .today {
    outline: 1px solid #6fb0ea;
    outline-offset: -1px;
    background: #a8dbfd;
    font-weight: 700;
}

.requests {
    flex: 1;
    min-height: 0;
    display: flex;
    flex-direction: column;
    border: 2px solid var(--soft);
    border-width: 2px 1px 1px 2px;
    background: var(--pane);
}

.requests .data {
    width: 100%;
}

.requests td:last-child,
.requests th:last-child {
    border-right: none;
}

.requests .filter td {
    height: 27px;
    padding: 0 0 5px;
    border-right: none;
    border-bottom: 1px solid var(--line);
    background: linear-gradient(#faf0e0 21px, var(--line) 21px 22px, #f3f0ea 22px);
}

.requests .filter th {
    height: 27px;
    border-top: none;
}

.filter input {
    display: block;
    width: 100%;
    height: 20px;
    text-align: center;
}

.filter input::placeholder {
    color: #808080;
    opacity: 1;
}

.requests-foot {
    height: 30px;
    margin-top: auto;
    border: 1px solid var(--line);
    border-right: none;
    background: var(--bar);
}

/* Scheduler */
.scheduler {
    flex: 1;
    min-width: 0;
    display: flex;
    flex-direction: column;
    border: 1px solid var(--soft);
    border-top: none;
    background: var(--pane);
    font: 11px/13px "DejaVu Sans Condensed", "DejaVu Sans", sans-serif;
}

.sched-main {
    flex: 1;
    min-height: 0;
    display: flex;
    overflow: hidden;
}

.scheduler > .hscroll {
    flex: none;
    height: 18px;
}

.ruler {
    flex: none;
    width: 55px;
    background: linear-gradient(90deg, #f6f5f1, #e6e0cf);
    color: #a08573;
}

.ruler-head {
    height: 57px;
    border-bottom: 1px solid var(--line);
}

.hour {
    height: 44px;
    margin: 0 6px 0 5px;
    display: grid;
    grid-template-columns: 26px 18px;
    grid-template-rows: 22px 22px;
    border-bottom: 1px solid #a3a3a3;
    text-align: center;
    font-family: "Noto Sans", sans-serif;
}

.hour b {
    font-size: 20px;
    font-weight: 400;
    line-height: 30px;
}

.hour span {
    line-height: 24px;
}

.hour b + span {
    border-bottom: 1px solid #a3a3a3;
}

.hour span:last-child {
    grid-column: 2;
}

.day {
    flex: 1;
    min-width: 0;
    display: flex;
    flex-direction: column;
    border-left: 1px solid var(--line);
}

.day-title {
    flex: none;
    height: 19px;
    border-top: 1px solid var(--line);
    border-bottom: 1px solid var(--line);
    background: linear-gradient(#fff3a8, #ffaf26);
    line-height: 18px;
    text-align: center;
}

.resources {
    flex: 1;
    display: flex;
}

.resource {
    flex: 1;
    min-width: 0;
    display: flex;
    flex-direction: column;
    border-right: 1px solid var(--line);
}

.resource:last-child {
    border-right: none;
}

.resource-head {
    height: 38px;
    display: flex;
    align-items: center;
    justify-content: center;
    gap: 2px;
    border-bottom: 1px solid var(--line);
    background: var(--bar);
}

.resource-head svg {
    width: 32px;
    height: 34px;
}

.red svg {
    color: #fe0000;
}

.navy-icon svg {
    color: #003cb4;
}

.slots {
    position: relative;
    flex: 1;
    margin-left: 5px;
    border-left: 1px solid var(--line);
    background: repeating-linear-gradient(transparent 0 21px, var(--half) 21px 22px, transparent 22px 43px, var(--full) 43px 44px) var(--fill);
}

.yellow { --fill: #fef2b9; --half: #f5e4ae; --full: #efd095; }
.gray { --fill: #f0f0f0; --half: #a0a0a0; --full: #a0a0a0; }
.green { --fill: #b2d597; --half: #a5c98a; --full: #8db374; }
.steel { --fill: #8b9dc0; --half: #8092b8; --full: #60729a; }

.event {
    position: absolute;
    left: 0;
    right: 4px;
    padding: 4px 0 0 3px;
    border: 1px solid #c05c56;
    border-left: none;
    border-radius: 0 5px 5px 0;
    background: #f67a72;
    box-shadow: 2px 3px 3px rgba(0, 0, 0, 0.35);
}

.event::before {
    content: "";
    position: absolute;
    left: -6px;
    top: -1px;
    bottom: -1px;
    width: 7px;
    border: 1px solid #000;
    background: #fff;
}

.nissan {
    top: 88px;
    height: 66px;
}

.toyota {
    top: 176px;
    height: 44px;
    padding-top: 3px;
}

.selected {
    position: absolute;
    left: 0;
    right: 0;
    top: 264px;
    height: 21px;
    background: #316ac5;
}

.jump {
    position: absolute;
    top: 29px;
    width: 25px;
    height: 191px;
    display: flex;
    flex-direction: column;
    align-items: center;
    color: #b5b5b5;
}

.jump.prev {
    left: -7px;
}

.jump.next {
    right: -1px;
}

.jump svg {
    position: absolute;
    left: 0;
    top: 0;
    width: 25px;
    height: 191px;
}

.jump .tip {
    left: 8px;
    top: 19px;
    width: 8px;
    height: 8px;
    color: #c9bda5;
}

.jump span {
    position: relative;
    margin: auto 0 31px;
    writing-mode: vertical-rl;
    transform: rotate(180deg);
    white-space: nowrap;
}

/* Status bar */
.status {
    flex: none;
    height: 24px;
    padding: 1px 1px 1px;
    display: flex;
    gap: 1px;
    border-top: 1px solid var(--line);
    background: #f0ede6;
    font: 11px/20px "Liberation Sans", sans-serif;
}

.cell {
    display: flex;
    align-items: center;
    border: 1px solid var(--soft);
    background: var(--bar);
}

.led-cell {
    width: 31px;
    justify-content: center;
}

.led {
    width: 18px;
    height: 9px;
    border: 1px solid #067a06;
    background: linear-gradient(#4cff4c, #00a800 50%, #008000);
}

.date {
    width: 221px;
    padding-left: 3px;
}

.legend {
    width: 149px;
    gap: 4px;
    padding-left: 3px;
}

.legend i {
    width: 20px;
    height: 15px;
}

.k-red { background: #f00; }
.k-yellow { background: #ff0; }
.k-green { background: #0f0; }
.k-cream { background: #fffbf0; }
.k-silver { background: #c0c0c0; }

.legend b {
    width: 21px;
    height: 15px;
    background: #fff;
    font-size: 13px;
    line-height: 15px;
    text-align: center;
}

.fill {
    flex: 1;
}

.db {
    width: 103px;
    justify-content: center;
}

.phone-cell {
    width: 53px;
}

.phone {
    width: 34px;
    height: 18px;
    display: flex;
    justify-content: center;
    border: 1px solid var(--line);
    border-radius: 6px;
    background: var(--bar);
}

.phone svg {
    width: 12px;
    height: 16px;
}

.grip {
    width: 12px;
    height: 12px;
    margin: 8px 0 0 6px;
}
```
